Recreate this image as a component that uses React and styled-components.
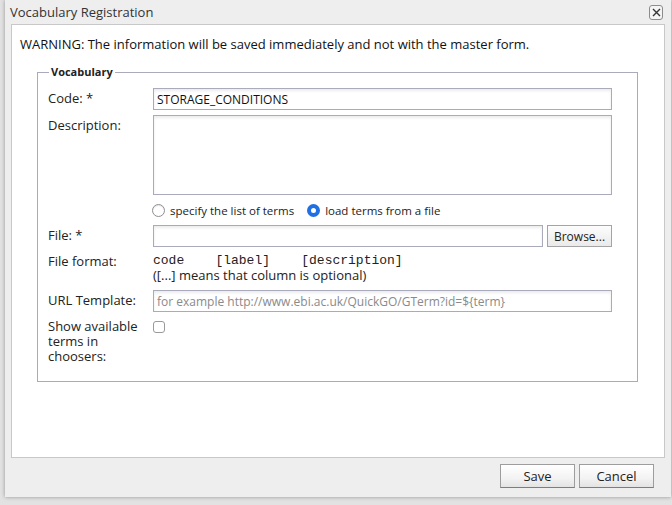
import React from 'react'
import styled, { createGlobalStyle } from 'styled-components'

const Global = createGlobalStyle`
  html, body {
    margin: 0;
    padding: 0;
    background: #e2e2e2;
    font-family: "Open Sans", "Noto Sans", sans-serif;
    overflow: hidden;
  }
`;

const Page = styled.div`
  width: 672px;
  height: 505px;
  padding-left: 5px;
  box-sizing: border-box;
`;

const Dialog = styled.div`
  width: 666px;
  height: 497px;
  background: #eeeeee;
  box-shadow: 0 0 4px rgba(0, 0, 0, 0.35);
  display: flex;
  flex-direction: column;
  padding: 0 6px;
  box-sizing: border-box;
`;

const TitleBar = styled.div`
  height: 24px;
  display: flex;
  align-items: center;
  justify-content: space-between;
  font-size: 13px;
  color: #333;
`;

const Title = styled.span`
  margin-left: -1px;
`;

const CloseBtn = styled.button`
  width: 14px;
  height: 15px;
  padding: 0;
  margin-right: 2px;
  border: 1px solid #8c8c8c;
  border-radius: 3px;
  background: #f4f4f4;
  display: flex;
  align-items: center;
  justify-content: center;
`;

const Panel = styled.div`
  flex: 1;
  background: #fff;
  border: 1px solid #c8c8c8;
  padding: 10px 0 0 8px;
  box-sizing: border-box;
`;

const Warning = styled.div`
  font-size: 13px;
  line-height: 18px;
  color: #111;
`;

const Fieldset = styled.fieldset`
  margin: 11px 26px 0 17px;
  padding: 8px 23px 17px 10px;
  border: 1px solid #a9aabb;
  min-width: 0;
`;

const Legend = styled.legend`
  font-size: 11px;
  font-weight: 700;
  color: #222;
  padding: 0 2px;
  margin-left: 1px;
  line-height: 16px;
`;

const Grid = styled.div`
  display: grid;
  grid-template-columns: 105px 459px;
  row-gap: 4px;
`;

const Label = styled.div`
  font-size: 13px;
  line-height: 15px;
  padding-top: ${p => p.$top || 3}px;
  color: #222;
`;

const Field = styled.div`
  display: flex;
  align-items: ${p => p.$align || 'stretch'};
  gap: 4px;
  margin-top: ${p => p.$top || 0}px;
`;

const inputBase = `
  box-sizing: border-box;
  border: 1px solid #a9aabb;
  box-shadow: inset 0 2px 3px rgba(0, 0, 0, 0.08);
  font-family: "Open Sans", "Noto Sans", sans-serif;
  font-size: 12px;
  color: #111;
  padding: 0 3px;
  outline: none;
  background: #fff;
`;

const TextInput = styled.input`
  ${inputBase}
  height: 22px;
  flex: 1;
  min-width: 0;
  &::placeholder {
    color: #8a8a8a;
  }
`;

const TextArea = styled.textarea`
  ${inputBase}
  height: 80px;
  width: 100%;
  resize: none;
`;

const RadioRow = styled.div`
  height: 22px;
  display: flex;
  align-items: center;
  font-size: 11.5px;
  color: #222;
  margin-left: -1px;
`;

const RadioLabel = styled.label`
  display: flex;
  align-items: center;
  gap: 5px;
  margin-right: 13px;
`;

const Radio = styled.span`
  width: 13px;
  height: 13px;
  border-radius: 50%;
  box-sizing: border-box;
  border: ${p => (p.$on ? '4px solid #1f6fe5' : '1px solid #8e8e8e')};
  background: #fff;
  box-shadow: ${p => (p.$on ? 'none' : 'inset 0 1px 1px rgba(0,0,0,0.1)')};
`;

const BrowseBtn = styled.button`
  height: 22px;
  width: 65px;
  border: 1px solid #a4a4a4;
  background: linear-gradient(#fdfdfd, #eaeaea);
  font-family: "Open Sans", "Noto Sans", sans-serif;
  font-size: 12px;
  color: #222;
  padding: 0;
`;

const Format = styled.div`
  padding: 3px 0 4px;
  font-size: 13px;
  line-height: 14px;
  color: #222;
`;

const Mono = styled.pre`
  margin: 0;
  font-family: "Liberation Mono", "Courier New", monospace;
  font-size: 13px;
  line-height: 14px;
  color: #222;
`;

const Check = styled.span`
  display: block;
  width: 12px;
  height: 12px;
  margin-top: 5px;
  border: 1px solid #9a9a9a;
  border-radius: 3px;
  box-sizing: border-box;
  background: #fff;
`;

const ButtonBar = styled.div`
  height: 39px;
  display: flex;
  justify-content: flex-end;
  gap: 4px;
  padding: 6px 11px 0 0;
  box-sizing: border-box;
`;

const Button = styled.button`
  width: 75px;
  height: 24px;
  border: 1px solid #9d9d9d;
  border-bottom-color: #7d7d7d;
  background: linear-gradient(#ffffff, #f3f3f3 60%, #e3e3e3);
  font-family: "Open Sans", "Noto Sans", sans-serif;
  font-size: 13px;
  color: #222;
  padding: 0;
`;

export default function App() {
  return (
    <Page>
      <Global />
      <Dialog>
        <TitleBar>
          <Title>Vocabulary Registration</Title>
          <CloseBtn aria-label="close">
            <svg width="9" height="9" viewBox="0 0 9 9">
              <path d="M1 1 L8 8 M8 1 L1 8" stroke="#333" strokeWidth="1.4" />
            </svg>
          </CloseBtn>
        </TitleBar>

        <Panel>
          <Warning>WARNING: The information will be saved immediately and not with the master form.</Warning>
          <Fieldset>
            <Legend>Vocabulary</Legend>
            <Grid>
              <Label>Code: *</Label>
              <Field>
                <TextInput defaultValue="STORAGE_CONDITIONS" />
              </Field>

              <Label $top={4}>Description:</Label>
              <Field $top={1}>
                <TextArea />
              </Field>

              <div />
              <RadioRow>
                <RadioLabel><Radio />specify the list of terms</RadioLabel>
                <RadioLabel><Radio $on />load terms from a file</RadioLabel>
              </RadioRow>

              <Label>File: *</Label>
              <Field>
                <TextInput />
                <BrowseBtn>Browse...</BrowseBtn>
              </Field>

              <Label>File format:</Label>
              <Format>
                <Mono>{'code    [label]    [description]'}</Mono>
                ([...] means that column is optional)
              </Format>

              <Label>URL Template:</Label>
              <Field>
                <TextInput placeholder="for example http://www.ebi.ac.uk/QuickGO/GTerm?id=${term}" />
              </Field>

              <Label>Show available<br />terms in<br />choosers:</Label>
              <Field $align="flex-start">
                <Check />
              </Field>
            </Grid>
          </Fieldset>
        </Panel>

        <ButtonBar>
          <Button>Save</Button>
          <Button>Cancel</Button>
        </ButtonBar>
      </Dialog>
    </Page>
  )
}
